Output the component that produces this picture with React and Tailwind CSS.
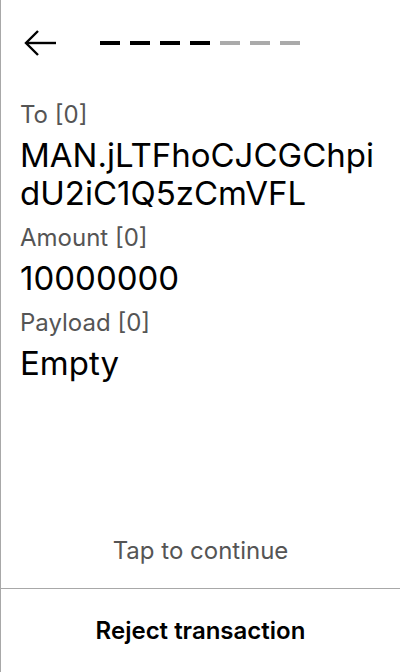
import React from 'react';

const fields = [
  { label: 'To [0]', value: 'MAN.jLTFhoCJCGChpidU2iC1Q5zCmVFL' },
  { label: 'Amount [0]', value: '10000000' },
  { label: 'Payload [0]', value: 'Empty' },
];

const steps = [true, true, true, true, false, false, false];

export default function App() {
  return (
    <div
      className="flex h-screen w-full flex-col border-l border-[#a8a8a8] bg-white text-black"
      style={{ fontFamily: 'Inter, "Noto Sans", sans-serif' }}
    >
      {/* Header */}
      <div className="flex h-[86px] items-center px-[23px]">
        <svg width="33" height="28" viewBox="0 0 33 28" fill="none" stroke="black" strokeWidth="2.4">
          <path d="M32 14H2" />
          <path d="M14 2L2 14l12 12" />
        </svg>
        <div className="ml-[43px] flex gap-[10px]">
          {steps.map((done, i) => (
            <div key={i} className={`h-1 w-5 ${done ? 'bg-black' : 'bg-[#aaaaaa]'}`} />
          ))}
        </div>
      </div>

      {/* Fields */}
      <div className="flex flex-1 flex-col gap-[11px] pl-[19px] pr-5 pt-[14px]">
        {fields.map((f) => (
          <div key={f.label} className="flex flex-col">
            <div className="text-[24px] leading-[30px] text-[#555555]">{f.label}</div>
            <div className="mt-[6px] break-all text-[33px] leading-[38px]">{f.value}</div>
          </div>
        ))}
      </div>

      <div className="pb-[22px] text-center text-[24px] leading-[30px] text-[#555555]">Tap to continue</div>

      <button className="flex h-[84px] items-center justify-center border-t border-[#a8a8a8] text-[24px] font-semibold">
        Reject transaction
      </button>
    </div>
  );
}
